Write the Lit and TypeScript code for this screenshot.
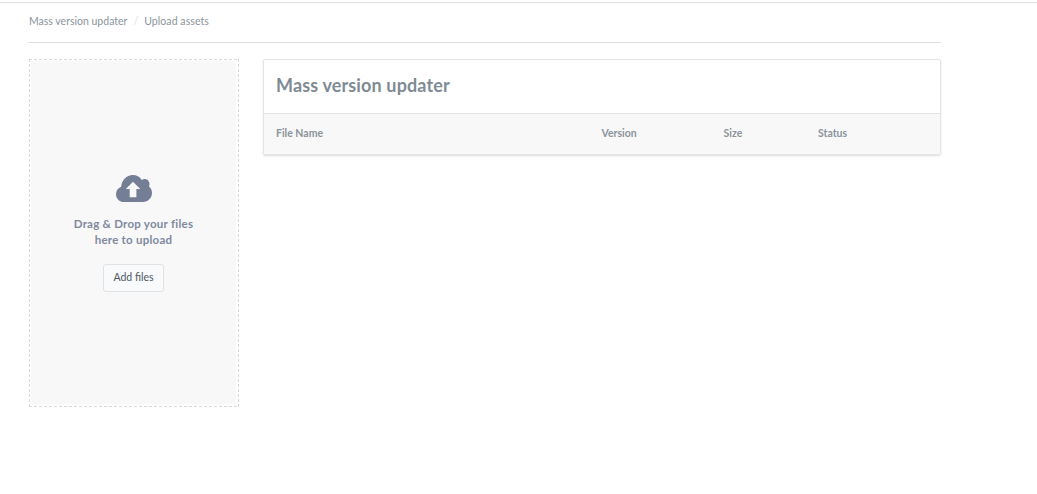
import { LitElement, html, css } from "lit";
import { customElement } from "lit/decorators.js";

@customElement("app-root")
export class AppRoot extends LitElement {
  static styles = css`
    :host {
      display: block;
      min-height: 494px;
      background: #fff;
      font-family: "Lato", "Noto Sans", sans-serif;
      box-sizing: border-box;
    }
    * { box-sizing: border-box; }
    .topline { height: 3px; border-bottom: 1px solid #e2e2e4; box-shadow: 0 1px 2px rgba(0, 0, 0, 0.03); }
    .wrap { width: 912px; margin-left: 29px; }
    .crumbs {
      height: 40px;
      border-bottom: 1px solid #dcdde0;
      display: flex;
      align-items: center;
      font-size: 10.5px;
      color: #8b949c;
      padding-bottom: 3px;
      gap: 5px;
    }
    .sep { color: #dfe0e3; padding: 0 1px; }
    .last { letter-spacing: 0.08px; }
    .cols { display: flex; gap: 24px; margin-top: 16px; align-items: flex-start; }
    .drop {
      --dash: repeating-linear-gradient(90deg, #d9d9dd 0 3px, transparent 3px 5px);
      --dash-v: repeating-linear-gradient(180deg, #d9d9dd 0 3px, transparent 3px 5px);
      width: 210px;
      height: 348px;
      padding: 2px 3px 3px 2px;
      flex: none;
      background:
        var(--dash) top left / 100% 1px no-repeat,
        var(--dash) bottom left / 100% 1px no-repeat,
        var(--dash-v) top left / 1px 100% no-repeat,
        var(--dash-v) top right / 1px 100% no-repeat;
    }
    .drop-inner {
      height: 100%;
      background: #f8f8f8;
      display: flex;
      flex-direction: column;
      align-items: center;
      padding-top: 114px;
    }
    .icon { width: 36px; height: 27px; display: block; fill: #747f96; }
    .msg {
      margin-top: 14px;
      font-size: 11.5px;
      line-height: 16px;
      font-weight: 700;
      letter-spacing: 0.25px;
      color: #7f8a9f;
      text-align: center;
    }
    .btn {
      margin-top: 16px;
      width: 61px;
      height: 28px;
      border: 1px solid #dfe1e5;
      border-radius: 3px;
      background: #f9fafb;
      color: #4d5864;
      font: inherit;
      font-size: 10.5px;
      padding: 0 0 2px;
    }
    .card {
      flex: 1;
      height: 96px;
      border: 1px solid #e4e5e7;
      border-radius: 2px;
      box-shadow: 0 1px 2px rgba(60, 65, 80, 0.18);
      display: flex;
      flex-direction: column;
    }
    .title {
      height: 53px;
      display: flex;
      align-items: center;
      padding-left: 12px;
      font-size: 18px;
      font-weight: 700;
      letter-spacing: 0.14px;
      color: #7f8b94;
      padding-bottom: 4px;
    }
    .head {
      flex: 1;
      background: #f8f8f8;
      border-top: 1px solid #e2e3e8;
      display: grid;
      grid-template-columns: 325.5px 122px 94.5px 1fr;
      align-items: center;
      padding: 0 0 2px 12px;
      font-size: 10.5px;
      font-weight: 700;
      color: #8b949c;
    }
  `;

  render() {
    return html`
      <div class="topline"></div>
      <div class="wrap">
        <nav class="crumbs">
          <span>Mass version updater</span><span class="sep">/</span><span class="last">Upload assets</span>
        </nav>
        <div class="cols">
          <section class="drop">
            <div class="drop-inner">
              <svg class="icon" viewBox="0 0 36 27" aria-hidden="true">
                <path fill-rule="evenodd" d="M8 27C3.400 27 0 23.500 0 19.200 0 15.700 2.100 12.800 5.200 11.700 5.600 5.200 10.600 0 16.800 0c3.800 0 7 1.900 9 4.900 .8-.5 1.700-.8 2.700-.8 2.800 0 5 2.200 5 5 0 .8-.2 1.600-.5 2.300C34.900 12.800 36 15 36 17.800c0 5.200-3.900 9.200-9 9.200H8Zm9-20.300L9.800 14h3.900v8.300h6.700V14h3.900L17 6.700Z"/>
              </svg>
              <div class="msg">Drag &amp; Drop your files<br />here to upload</div>
              <button class="btn">Add files</button>
            </div>
          </section>
          <section class="card">
            <div class="title">Mass version updater</div>
            <div class="head">
              <span>File Name</span><span>Version</span><span>Size</span><span>Status</span>
            </div>
          </section>
        </div>
      </div>
    `;
  }
}
